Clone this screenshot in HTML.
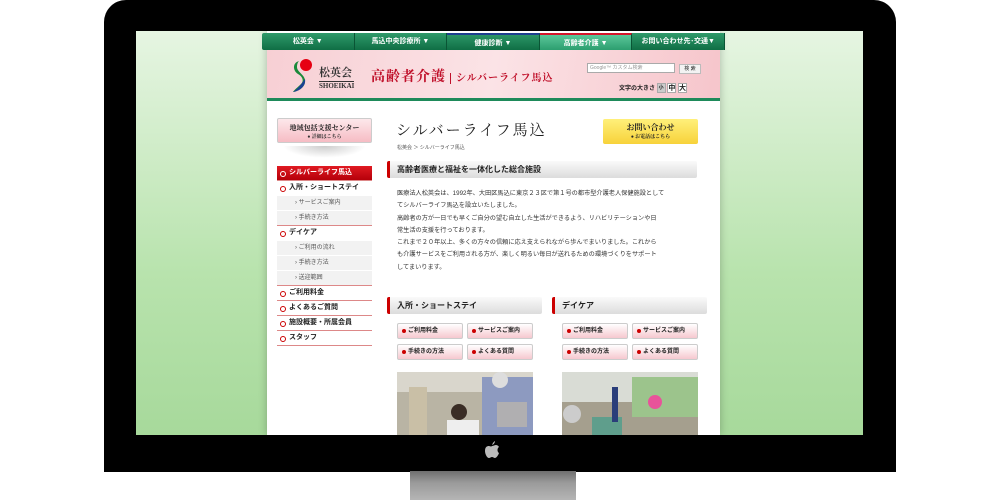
<!DOCTYPE html>
<html><head><meta charset="utf-8"><style>
*{margin:0;padding:0;box-sizing:border-box}
body{width:1000px;height:500px;background:#fff;position:relative;overflow:hidden;font-family:"Liberation Sans","Noto Sans CJK JP",sans-serif;color:#222}
.bezel{position:absolute;left:104px;top:0;width:792px;height:472px;background:#000;border-radius:22px 22px 0 0}
.stand{position:absolute;left:410px;top:471px;width:166px;height:29px;background:linear-gradient(#6e6e6e,#9a9a9a 40%,#b5b5b5)}
.screen{position:absolute;left:136px;top:31px;width:727px;height:404px;background:linear-gradient(#e6f5e2,#b8e3ad 60%,#a7d99b);overflow:hidden}
.page{position:absolute;left:131px;top:0;width:453px;height:404px;background:#fff;box-shadow:0 0 8px rgba(0,0,0,.25)}
.nav{position:absolute;left:-5px;top:2px;width:463px;height:17px;background:linear-gradient(#2f9a6a,#0f6e45);display:flex;border-radius:2px}
.nav div{flex:1;color:#fff;font-size:7px;font-weight:bold;text-align:center;line-height:17px;border-right:1px solid #0a5535}
.nav div.on{background:linear-gradient(#5bc79a,#2c9e6f)}
.hdr{position:absolute;left:0;top:19px;width:453px;height:51px;background:linear-gradient(100deg,#f7cfd4,#fbe3e6 50%,#f6c5cb);border-bottom:3px solid #1e8a5a}
.logo{position:absolute;left:24px;top:9px;width:22px;height:34px}
.lt{position:absolute;left:52px;top:14px;font-size:11px;font-family:"Liberation Serif","Noto Serif CJK SC",serif;color:#333;font-weight:bold}
.lt small{display:block;font-size:7px;border-top:1px solid #333;margin-top:1px}
.title{position:absolute;left:104px;top:16px;font-size:14px;font-family:"Liberation Serif","Noto Serif CJK SC",serif;color:#c0102a;font-weight:bold;letter-spacing:1px}
.title span{font-size:10px;border-left:1px solid #c0102a;padding-left:5px;margin-left:4px}
.srch{position:absolute;left:320px;top:13px;width:88px;height:10px;background:#fff;border:1px solid #aaa;font-size:5px;color:#999;padding-left:2px;line-height:9px}
.btn{position:absolute;left:412px;top:14px;width:22px;height:10px;background:#f3f3f3;border:1px solid #bbb;font-size:5px;text-align:center;line-height:8px}
.fs{position:absolute;left:352px;top:33px;font-size:6px;font-weight:bold}
.box{display:inline-block;width:9px;height:10px;border:1px solid #aaa;background:#fff;font-size:7px;text-align:center;line-height:9px;vertical-align:middle}
.side{position:absolute;left:10px;top:87px;width:95px}
.sb{height:25px;background:linear-gradient(#fde8eb,#f6bcc4);border:1px solid #ccc;border-radius:2px;text-align:center;font-size:7px;font-weight:bold;padding-top:4px;font-family:"Liberation Serif","Noto Serif CJK SC",serif}
.sb i{display:block;font-style:normal;font-size:5px;color:#333}
.m{font-size:7px;font-weight:bold;height:15px;line-height:14px;border-bottom:1px solid #d88;padding-left:12px;position:relative}
.m:before{content:"";position:absolute;left:3px;top:5px;width:4px;height:4px;border:1px solid #c00;border-radius:50%}
.m.top{background:linear-gradient(#e01a22,#b5000a);color:#fff}
.m.top:before{border-color:#fff}
.s{font-size:6px;color:#555;height:15px;line-height:14px;background:#f2f2f2;border-bottom:1px solid #fff;padding-left:18px}
.main{position:absolute;left:120px;top:88px;width:310px}
h1{font-size:15px;font-family:"Liberation Serif","Noto Serif CJK SC",serif;font-weight:normal;letter-spacing:2px;padding-left:9px}
.bc{font-size:5px;color:#555;margin-top:4px;padding-left:10px}
.ctc{position:absolute;left:216px;top:0;width:95px;height:25px;background:linear-gradient(#fff07a,#f7d23a);border-radius:2px;text-align:center;font-size:8px;font-weight:bold;padding-top:3px;font-family:"Liberation Serif","Noto Serif CJK SC",serif}
.ctc i{display:block;font-style:normal;font-size:5px}
.h2{height:17px;background:linear-gradient(#fafafa,#dcdcdc);border-left:3px solid #c00;font-size:8px;font-weight:bold;line-height:17px;padding-left:7px;border-radius:2px}
.txt{font-size:6.2px;line-height:12.3px;padding:10px 0 0 10px;color:#333}
.col{position:absolute;top:266px;width:155px}
.b2{position:absolute;width:66px;height:16px;background:linear-gradient(#fff,#f6c8cf);border:1px solid #ccc;border-radius:2px;font-size:6px;font-weight:bold;line-height:14px;padding-left:10px}
.b2:before{content:"";position:absolute;left:4px;top:5px;width:4px;height:4px;background:#c00;border-radius:50%}
.ph{position:absolute;top:53px;left:10px;width:136px;height:70px}
</style></head><body>
<div class="bezel"></div>
<div class="stand"></div>
<div class="screen">
<div class="page">
 <div class="nav"><div>松英会 ▼</div><div>馬込中央診療所 ▼</div><div style="border-top:2px solid #1d3f8f">健康診断 ▼</div><div class="on" style="border-top:2px solid #d4142a">高齢者介護 ▼</div><div>お問い合わせ先･交通▼</div></div>
 <div class="hdr">
  <svg class="logo" viewBox="0 0 22 34"><circle cx="15" cy="6" r="6" fill="#e60012"/><path d="M8 2C1 4 2 12 7 15c5 3 6 7 3 10C7 28 3 31 2 33 9 32 15 27 14 21 13 15 6 13 6 8 6 5 7 3 8 2z" fill="#1a8a3a"/><path d="M14 20c1 7-5 12-12 13 6-4 9-9 12-13z" fill="#1c3f94"/></svg>
  <div class="lt">松英会<small>SHOEIKAI</small></div>
  <div class="title">高齢者介護<span>シルバーライフ馬込</span></div>
  <div class="srch">Google™ カスタム検索</div><div class="btn">検 索</div>
  <div class="fs">文字の大きさ <span class="box" style="font-size:5px;background:#ccc">小</span> <span class="box">中</span> <span class="box">大</span></div>
 </div>
 <div class="side">
  <div class="sb">地域包括支援センター<i>● 詳細はこちら</i></div>
  <div style="height:12px;margin:3px 6px 0;background:radial-gradient(ellipse at top,rgba(0,0,0,.2),transparent 70%)"></div>
  <div style="height:8px"></div>
  <div class="m top">シルバーライフ馬込</div>
  <div class="m" style="border:0">入所・ショートステイ</div>
  <div class="s">› サービスご案内</div><div class="s" style="border-bottom:1px solid #d88">› 手続き方法</div>
  <div class="m" style="border:0">デイケア</div>
  <div class="s">› ご利用の流れ</div><div class="s">› 手続き方法</div><div class="s" style="border-bottom:1px solid #d88">› 送迎範囲</div>
  <div class="m">ご利用料金</div><div class="m">よくあるご質問</div><div class="m">施設概要・所属会員</div><div class="m">スタッフ</div>
 </div>
 <div class="main">
  <h1>シルバーライフ馬込</h1>
  <div class="bc">松英会 ＞ シルバーライフ馬込</div>
  <div class="ctc">お問い合わせ<i>● お電話はこちら</i></div>
  <div class="h2" style="margin-top:10px">高齢者医療と福祉を一体化した総合施設</div>
  <div class="txt">医療法人松英会は、1992年、大田区馬込に東京２３区で第１号の都市型介護老人保健施設として<br>てシルバーライフ馬込を設立いたしました。<br>高齢者の方が一日でも早くご自分の望む自立した生活ができるよう、リハビリテーションや日<br>常生活の支援を行っております。<br>これまで２０年以上、多くの方々の信頼に応え支えられながら歩んでまいりました。これから<br>も介護サービスをご利用される方が、楽しく明るい毎日が送れるための環境づくりをサポート<br>してまいります。</div>
 </div>
 <div class="col" style="left:120px">
  <div class="h2">入所・ショートステイ</div>
  <div class="b2" style="left:10px;top:26px">ご利用料金</div><div class="b2" style="left:80px;top:26px">サービスご案内</div>
  <div class="b2" style="left:10px;top:47px">手続きの方法</div><div class="b2" style="left:80px;top:47px">よくある質問</div>
  <svg class="ph" style="top:75px" viewBox="0 0 136 70"><rect width="136" height="70" fill="#b9b4a4"/><rect width="136" height="20" fill="#d9d6cc"/><rect x="85" y="5" width="51" height="65" fill="#8d9ac0"/><circle cx="103" cy="8" r="8" fill="#ddd"/><rect x="50" y="48" width="32" height="22" fill="#eee"/><circle cx="62" cy="40" r="8" fill="#3a2d25"/><rect x="12" y="15" width="18" height="55" fill="#c9bfa6"/><rect x="100" y="30" width="30" height="25" fill="#e6cf9c" opacity=".4"/></svg>
 </div>
 <div class="col" style="left:285px">
  <div class="h2">デイケア</div>
  <div class="b2" style="left:10px;top:26px">ご利用料金</div><div class="b2" style="left:80px;top:26px">サービスご案内</div>
  <div class="b2" style="left:10px;top:47px">手続きの方法</div><div class="b2" style="left:80px;top:47px">よくある質問</div>
  <svg class="ph" style="top:75px" viewBox="0 0 136 70"><rect width="136" height="70" fill="#a59f8e"/><rect width="136" height="30" fill="#d9dcd5"/><rect x="70" y="5" width="66" height="40" fill="#9cc48c"/><circle cx="93" cy="30" r="7" fill="#e8539a"/><circle cx="10" cy="42" r="9" fill="#ccc"/><rect x="30" y="45" width="30" height="20" fill="#5f9e8c"/><rect x="50" y="15" width="6" height="35" fill="#2a3e7a"/></svg>
 </div>
</div>
</div>
<svg style="position:absolute;left:485px;top:441px" width="14" height="17" viewBox="0 0 14 17"><path d="M7 4C8 1 10 0 10 0s0 3-3 4zM7 5c1 0 3-1 4-1 2 0 3 2 3 2-2 1-2 5 0 6-1 3-3 5-4 5s-2-1-3-1-2 1-3 1C2 17 0 13 0 10c0-4 2-5 4-5 1 0 2 1 3 0z" fill="#bbb"/></svg>
</body></html>
